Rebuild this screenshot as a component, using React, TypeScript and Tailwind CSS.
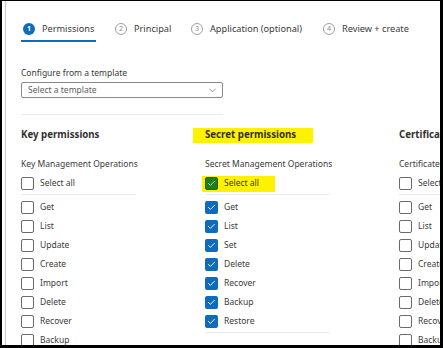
import { Check, ChevronDown } from 'lucide-react';

const font = { fontFamily: '"Noto Sans", "Open Sans", sans-serif' };

const tabs = [
  { n: 1, label: 'Permissions', w: 'w-[92px]' },
  { n: 2, label: 'Principal', w: 'w-[76px]' },
  { n: 3, label: 'Application (optional)', w: 'w-[132px]' },
  { n: 4, label: 'Review + create', w: 'w-[90px]' },
];

function Box({ checked, green }: { checked?: boolean; green?: boolean }) {
  if (green) {
    return (
      <span className="w-[13px] h-[13px] rounded-[2px] bg-[#1e7d1e] border border-[#176317] flex items-center justify-center shrink-0">
        <Check className="w-[9px] h-[9px] text-[#b6e3a4]" strokeWidth={2.5} />
      </span>
    );
  }
  if (checked) {
    return (
      <span className="w-[13px] h-[13px] rounded-[2px] bg-[#0f6cbd] flex items-center justify-center shrink-0">
        <Check className="w-[9px] h-[9px] text-white" strokeWidth={2.5} />
      </span>
    );
  }
  return <span className="w-[13px] h-[13px] rounded-[2px] border border-[#6b6a69] bg-white shrink-0" />;
}

function Row({ label, checked }: { label: string; checked?: boolean }) {
  return (
    <div className="h-[19px] flex items-center gap-[6px] whitespace-nowrap">
      <Box checked={checked} />
      <span>{label}</span>
    </div>
  );
}

const keyOps = ['Get', 'List', 'Update', 'Create', 'Import', 'Delete', 'Recover', 'Backup'];
const secretOps = ['Get', 'List', 'Set', 'Delete', 'Recover', 'Backup', 'Restore'];

export default function App() {
  return (
    <div className="w-[443px] h-[348px] bg-black pt-[1px] pl-[2px] pr-[3px] pb-[3px]" style={font}>
      <div className="h-full bg-white pl-[3px] overflow-hidden">
        <div className="h-full border-l border-[#c8c8c8] pl-[15px] text-[8.5px] text-[#3b3a39] overflow-hidden">
          {/* wizard tabs */}
          <div className="flex pt-[19px] whitespace-nowrap text-[9.2px]">
            {tabs.map((t) => (
              <div key={t.n} className={`${t.w} shrink-0`}>
                <div
                  className={`inline-flex items-center gap-[7px] h-[22px] px-[2px] pb-[2px] ${
                    t.n === 1 ? 'border-b-2 border-[#0f6cbd]' : 'border-b-2 border-transparent'
                  }`}
                >
                  {t.n === 1 ? (
                    <span className="w-[12px] h-[12px] rounded-full bg-[#0f6cbd] text-white text-[7px] font-bold flex items-center justify-center">
                      1
                    </span>
                  ) : (
                    <span className="w-[12px] h-[12px] rounded-full border border-[#a19f9d] text-[#8a8886] text-[7px] flex items-center justify-center">
                      {t.n}
                    </span>
                  )}
                  <span className="text-[#3b3a39]">{t.label}</span>
                </div>
              </div>
            ))}
          </div>

          {/* template */}
          <div className="mt-[24px] leading-[14px]">Configure from a template</div>
          <div className="mt-[2px] w-[202px] h-[16px] border border-[#8a8886] rounded-[2px] flex items-center justify-between pl-[6px] pr-[4px]">
            <span className="text-[#605e5c]">Select a template</span>
            <ChevronDown className="w-[11px] h-[11px] text-[#605e5c]" strokeWidth={1.5} />
          </div>
          <div className="mt-[16px] w-[202px] border-t border-[#edebe9]" />

          {/* permission columns */}
          <div className="flex mt-[12px] whitespace-nowrap">
            <div className="w-[184px] shrink-0">
              <div className="h-[16px] flex items-center font-bold text-[9.7px] text-[#323130]">Key permissions</div>
              <div className="mt-[14px] h-[14px] flex items-center">Key Management Operations</div>
              <div className="mt-[3px] w-[115px] border-b border-[#edebe9] pb-[1px]">
                <Row label="Select all" />
              </div>
              <div className="mt-[3px]">
                {keyOps.map((o) => (
                  <Row key={o} label={o} />
                ))}
              </div>
            </div>

            <div className="w-[194px] shrink-0">
              <div className="h-[16px] flex items-center">
                <span className="-ml-[12px] pl-[12px] w-[120px] h-[15px] bg-[#fff100] flex items-center font-bold text-[9.7px] text-[#323130]">
                  Secret permissions
                </span>
              </div>
              <div className="mt-[14px] h-[14px] flex items-center">Secret Management Operations</div>
              <div className="mt-[3px] w-[125px] border-b border-[#edebe9] pb-[1px]">
                <div className="h-[19px] flex items-center">
                  <span className="-ml-[3px] pl-[3px] w-[73px] h-[16px] bg-[#fff100] flex items-center gap-[6px]">
                    <Box green />
                    <span>Select all</span>
                  </span>
                </div>
              </div>
              <div className="mt-[3px] w-[125px] border-b border-[#edebe9] pb-[1px]">
                {secretOps.map((o) => (
                  <Row key={o} label={o} checked />
                ))}
              </div>
            </div>

            <div className="w-[60px] shrink-0">
              <div className="h-[16px] flex items-center font-bold text-[9.7px] text-[#323130]">Certificate permissions</div>
              <div className="mt-[14px] h-[14px] flex items-center">Certificate Management Operations</div>
              <div className="mt-[3px] w-[140px] border-b border-[#edebe9] pb-[1px]">
                <Row label="Select all" />
              </div>
              <div className="mt-[3px]">
                {['Get', 'List', 'Update', 'Create', 'Import', 'Delete', 'Recover', 'Backup'].map((o) => (
                  <Row key={o} label={o} />
                ))}
              </div>
            </div>
          </div>
        </div>
      </div>
    </div>
  );
}
